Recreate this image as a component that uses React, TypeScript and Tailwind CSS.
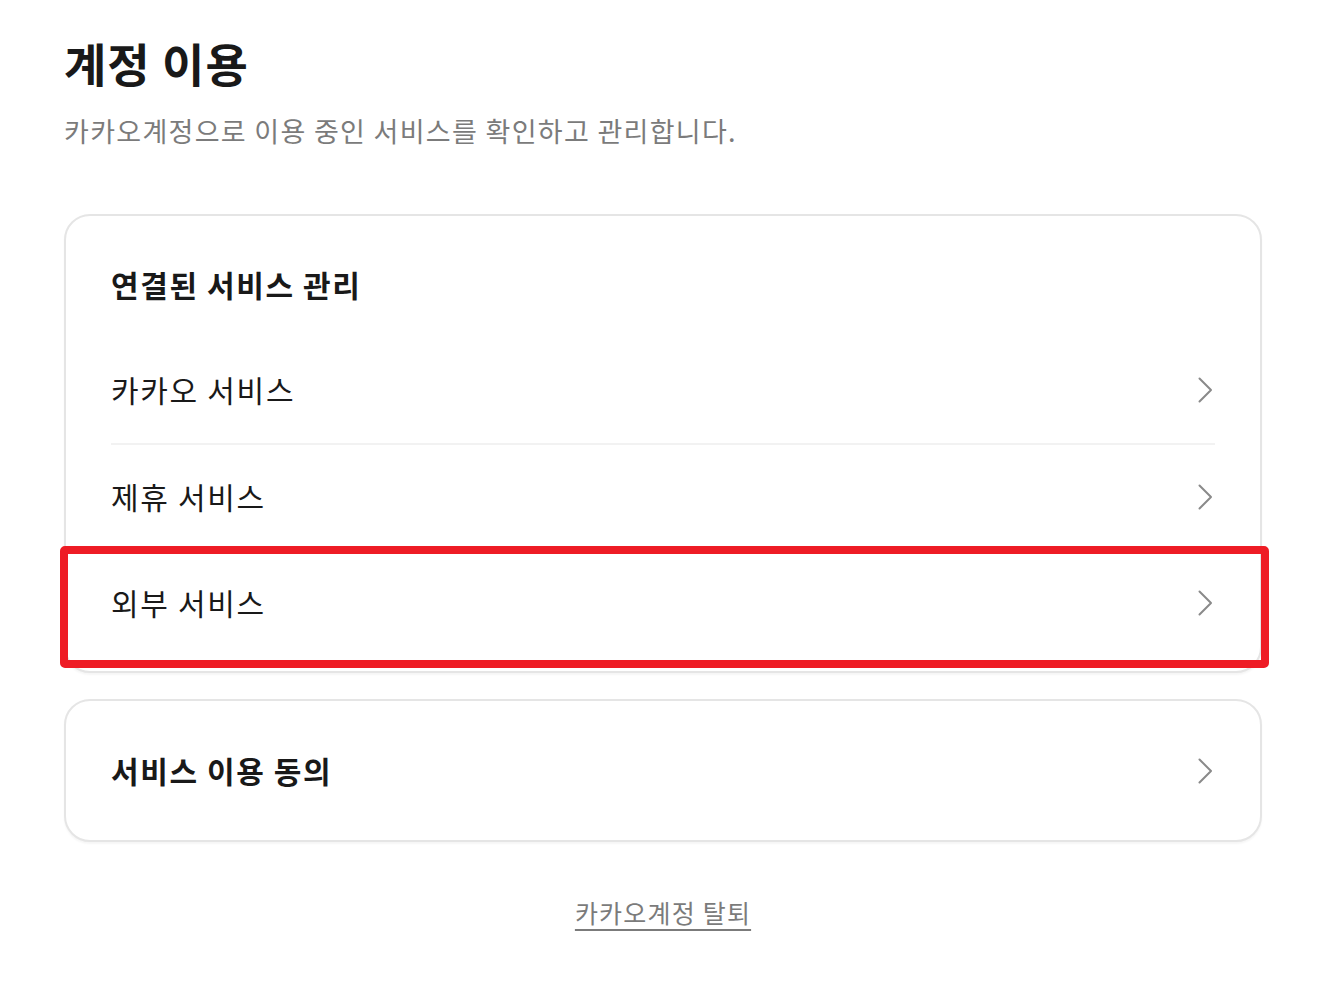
import type { ReactNode } from "react";

const font = { fontFamily: '"Noto Sans CJK KR", "Noto Sans", sans-serif' };

function Chevron() {
  return (
    <svg width="15" height="26" viewBox="0 0 15 26" fill="none" className="mr-[2px] shrink-0">
      <polyline
        points="1.5,1.5 13,13 1.5,24.5"
        stroke="#8a8a8a"
        strokeWidth="2"
        strokeLinecap="round"
        strokeLinejoin="round"
      />
    </svg>
  );
}

function Row({ children, divider }: { children: ReactNode; divider?: boolean }) {
  return (
    <div
      className={`flex h-[106px] items-center justify-between ${
        divider ? "border-t-2 border-[#f2f2f2]" : ""
      }`}
    >
      <span className="pb-[3px] text-[30px] leading-[40px] tracking-[1.7px] text-[#191919]">
        {children}
      </span>
      <Chevron />
    </div>
  );
}

export default function App() {
  return (
    <div className="min-h-[990px] bg-white" style={font}>
      <div className="ml-[64px] w-[1198px] pt-[33px]">
        <h1 className="text-[46px] font-bold leading-[58px] tracking-[1px] text-[#191919]">
          계정 이용
        </h1>
        <p className="mt-[22px] text-[27px] leading-[36px] tracking-[1.3px] text-[#7b7b7b]">
          카카오계정으로 이용 중인 서비스를 확인하고 관리합니다.
        </p>

        <div className="relative mt-[65px] rounded-[26px] border-2 border-[#e5e5e5] bg-white px-[45px] pb-[16px] pt-[48px] shadow-[0_2px_2px_rgba(0,0,0,0.04)]">
          <h2 className="text-[30px] font-bold leading-[40px] tracking-[1.6px] text-[#191919]">
            연결된 서비스 관리
          </h2>
          <div className="mt-[33px]">
            <Row>카카오 서비스</Row>
            <Row divider>제휴 서비스</Row>
            <Row divider>외부 서비스</Row>
          </div>
          <div className="absolute left-[-6px] right-[-9px] top-[330px] h-[122px] rounded-[5px] border-[8px] border-[#ee1c25]" />
        </div>

        <div className="mt-[26px] flex h-[143px] items-center justify-between rounded-[26px] border-2 border-[#e5e5e5] bg-white px-[45px] shadow-[0_2px_2px_rgba(0,0,0,0.04)]">
          <span className="pb-[2px] text-[30px] font-bold leading-[40px] tracking-[1.6px] text-[#191919]">
            서비스 이용 동의
          </span>
          <Chevron />
        </div>

        <div className="mt-[53px] flex justify-center">
          <a className="text-[25px] leading-[34px] tracking-[1.2px] text-[#7b7b7b] underline decoration-2 underline-offset-[6px]">
            카카오계정 탈퇴
          </a>
        </div>
      </div>
    </div>
  );
}
